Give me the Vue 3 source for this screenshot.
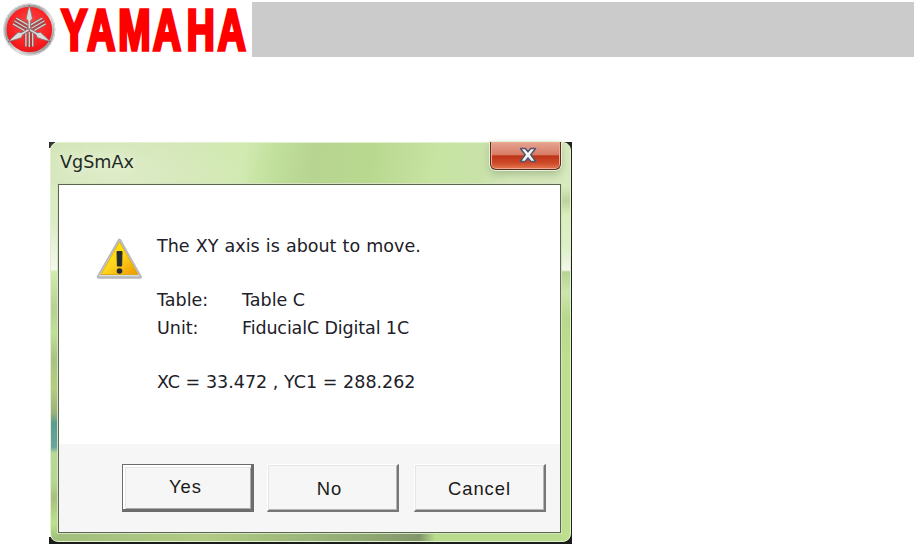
<template>
  <div class="page">
    <header class="header">
      <svg class="logo" viewBox="0 0 252 64" width="252" height="64">
        <defs>
          <linearGradient id="ring" x1="0" y1="0" x2="1" y2="1">
            <stop offset="0" stop-color="#c9c9c9" />
            <stop offset="0.35" stop-color="#999" />
            <stop offset="0.6" stop-color="#dedede" />
            <stop offset="1" stop-color="#777" />
          </linearGradient>
          <radialGradient id="disc" cx="0.5" cy="0.4" r="0.62">
            <stop offset="0" stop-color="#ff4a48" />
            <stop offset="0.7" stop-color="#f91d20" />
            <stop offset="1" stop-color="#e01419" />
          </radialGradient>
        </defs>
        <circle cx="29.3" cy="29.5" r="24.4" fill="url(#disc)" stroke="url(#ring)" stroke-width="3.2" />
        <circle cx="29.3" cy="29.5" r="25.5" fill="none" stroke="#e3e3e3" stroke-width="0.9" />
        <!-- three tuning forks -->
        <g v-for="angle in forks" :key="'t' + angle" :transform="`rotate(${angle + 180} 29.3 29.5)`">
          <path d="M25.9 27 V12.5 M29.3 27 V12 M32.7 27 V12.5" fill="none" stroke="#7d4a4b" stroke-width="2.6" />
          <path d="M25.9 27 V12.5 M29.3 27 V12 M32.7 27 V12.5" fill="none" stroke="#d0d0d0" stroke-width="1.4" />
        </g>
        <g v-for="angle in forks" :key="angle" :transform="`rotate(${angle} 29.3 29.5)`">
          <path d="M29.3 5 L31.3 13 L32.4 18.5 L30.5 21 V29 H28.1 V21 L26.2 18.5 L27.3 13 Z" fill="#dcdcdc" stroke="#7d6d6d" stroke-width="0.8" />
        </g>
        <text transform="scale(0.68 1)" x="90 128.3 174 225 274.5 320.3" y="49.5" class="brand">YAMAHA</text>
      </svg>
      <div class="bar"></div>
    </header>

    <div class="backdrop">
      <section class="dialog">
        <div class="titlebar">
          <span class="title">VgSmAx</span>
          <button class="close" aria-label="Close">
            <svg viewBox="0 0 20 18" width="20" height="18">
              <path d="M2.5 2.5 H7.3 L10 5.8 L12.7 2.5 H17.5 L12.8 8.8 L17.8 15.5 H12.8 L10 11.9 L7.2 15.5 H2.2 L7.2 8.8 Z" fill="#f5f5f5" stroke="#53566a" stroke-width="1.5" stroke-linejoin="round" />
            </svg>
          </button>
        </div>
        <div class="client">
          <div class="content">
            <svg class="warning" viewBox="0 0 48 44" width="48" height="44">
              <defs>
                <linearGradient id="yellow" x1="0" y1="0" x2="1" y2="1">
                  <stop offset="0" stop-color="#fff000" />
                  <stop offset="0.5" stop-color="#ffd51c" />
                  <stop offset="1" stop-color="#ee9500" />
                </linearGradient>
              </defs>
              <path d="M23.5 3.5 L44 40 H2.5 Z" fill="#b6b8bd" stroke="#b6b8bd" stroke-width="3.6" stroke-linejoin="round" />
              <path d="M23.5 4.5 L43 38.8 H3.5 Z" fill="#dedfe1" stroke="#dedfe1" stroke-width="1" stroke-linejoin="round" />
              <path d="M23.5 4.8 L42.2 37.5 H4.8 Z" fill="url(#yellow)" stroke="#d5a500" stroke-width="0.8" stroke-linejoin="round" />
              <path d="M21 14.5 H26 L25.6 29 H21.4 Z" fill="#222a32" stroke="#222a32" stroke-linejoin="round" />
              <circle cx="23.5" cy="34" r="2.8" fill="#222a32" />
            </svg>
            <div class="message">
              <p class="lead">The XY axis is about to move.</p>
              <p></p>
              <p><span class="label">Table:</span><span>Table C</span></p>
              <p><span class="label">Unit:</span><span class="unit">FiducialC Digital 1C</span></p>
              <p></p>
              <p class="position">XC = 33.472 , YC1 = 288.262</p>
            </div>
          </div>
          <div class="footer">
            <button class="btn btn-default">Yes</button>
            <button class="btn btn-no">No</button>
            <button class="btn btn-cancel">Cancel</button>
          </div>
        </div>
      </section>
    </div>
  </div>
</template>

<script setup>
const forks = [0, 120, 240]
</script>

<style>
body {
  margin: 0;
  background: #fff;
}
</style>

<style scoped>
.page {
  width: 914px;
  height: 544px;
  overflow: hidden;
  background: #fff;
}

.header {
  display: flex;
  height: 142px;
}

.logo {
  flex: none;
  display: block;
  overflow: visible;
}

.brand {
  font-family: "Liberation Sans", Arial, sans-serif;
  font-size: 57px;
  font-weight: bold;
  fill: #fe0000;
  stroke: #fe0000;
  stroke-width: 3.6;
}

.bar {
  flex: 1;
  height: 55px;
  margin-top: 2px;
  background: #cbcbcb;
}

/* dark desktop shows only at the corners, right and bottom edges */
.backdrop {
  width: 523px;
  height: 402px;
  margin-left: 49px;
  padding-left: 1px;
  box-sizing: border-box;
  background:
    linear-gradient(#333, #333) left top / 6px 6px no-repeat,
    linear-gradient(#1a1d1a, #1a1d1a) left bottom / 100% 7px no-repeat,
    linear-gradient(#1d241b, #1d241b) right top / 10px 100% no-repeat;
}

.dialog {
  box-sizing: border-box;
  width: 521px;
  height: 400px;
  padding: 0 9px 8px 7px;
  border: 1px solid #e3f0cf;
  border-radius: 8px;
  background:
    linear-gradient(180deg, transparent 42px, #d8edbd 42px, #dcebc8 80px, #f5f8ee 127px, #d2edaf 128px, #b6d193 165px, #bfe096 190px, #a8c382 215px, #b4cd81 245px, #9bb17d 270px, #599c92 280px, #66a4a0 304px, #b8d995 310px, #b6d693 340px, #a7bf7d 355px, #bce38d 380px, #a2bd7d 396px) left / 7px 100% no-repeat,
    linear-gradient(180deg, transparent 42px, #daedbd 42px, #bed3a0 58px, #daefbc 72px, #dcf0ca 105px, #f4f6ea 127px, #b6d493 129px, #cce6ac 150px, #b7d98b 175px, #bee08e 220px) right / 9px 100% no-repeat,
    linear-gradient(90deg, #a2be7d, #b1cb84 30%, #91aa75 60%, #839669 71%, #b8dc8c 74%) bottom / 100% 9px no-repeat,
    radial-gradient(ellipse 140px 60px at 60px 30px, #dfecc8, transparent),
    linear-gradient(100deg, #cbe1b0 0, #cfe5b2 20%, #d1eab0 33%, #c0df9a 39%, #b7d590 45%, #b9d88f 55%, #c7e4a2 66%, #c9e2a9 74%, #d4e7b8 79%, #dcecc5 100%);
}

.titlebar {
  display: flex;
  justify-content: space-between;
  height: 41px;
}

.title {
  padding: 6px 0 0 2px;
  font-family: "DejaVu Sans", sans-serif;
  font-size: 17.6px;
  line-height: 27px;
  color: #1d2a22;
  text-shadow: 0 0 8px #f2f8e8;
}

.close {
  display: flex;
  align-items: center;
  justify-content: center;
  width: 71px;
  height: 28px;
  padding: 0 0 2px 4px;
  box-sizing: border-box;
  margin-top: -1px;
  border: 1px solid #5c2b22;
  border-top: 0;
  border-radius: 0 0 6px 6px;
  background: linear-gradient(180deg, #e5a693 0, #d97c66 46%, #bd3418 52%, #cf4a29 78%, #e47a52 100%);
  box-shadow: inset 0 0 0 1px #eda98f, 0 0 0 1px #e6f0d5, 0 4px 8px #a5bb8d;
}

.client {
  display: flex;
  flex-direction: column;
  box-sizing: border-box;
  height: 349px;
  border: 1px solid #59664b;
  outline: 1px solid #d7e4c4;
  background: #fff;
}

.content {
  display: flex;
  flex: 1;
  padding: 48px 0 0 37px;
}

.warning {
  flex: none;
  margin-top: 4px;
}

.message {
  margin-left: 13px;
  font-family: "DejaVu Sans", sans-serif;
  font-size: 17.5px;
  color: #202028;
  white-space: nowrap;
}

.message p {
  display: flex;
  height: 27.2px;
  margin: 0;
  line-height: 27px;
}

.message .lead {
  word-spacing: 0.6px;
}

.message .position {
  word-spacing: 0.1px;
}

.label {
  width: 85px;
}

.unit {
  letter-spacing: -0.12px;
}

.footer {
  display: flex;
  box-sizing: border-box;
  height: 88px;
  padding: 20px 0 0 63px;
  background: #f6f6f6;
}

.btn {
  box-sizing: border-box;
  width: 132px;
  height: 48px;
  margin-right: 13px;
  padding: 3px 0 0;
  border: 1px solid #fff;
  border-right: 2px solid #777;
  border-bottom: 2px solid #777;
  background: #f6f6f6;
  box-shadow: inset 1px 1px #e5e5e5, inset -1px -1px #b5b5b5;
  font-family: "Liberation Sans", Arial, sans-serif;
  font-size: 18.4px;
  letter-spacing: 1px;
  color: #1a1a1a;
}

.btn-default {
  padding: 0 3px 0 0;
  border: 1px solid #6c6c6c;
  border-right: 3px solid #6c6c6c;
  border-bottom: 3px solid #6c6c6c;
  box-shadow: inset 2px 2px #fff, inset 3px 3px #e5e5e5, inset -1px -1px #aaa;
}

.btn-no {
  padding-right: 6px;
}

.btn-cancel {
  margin-left: 2px;
}
</style>
